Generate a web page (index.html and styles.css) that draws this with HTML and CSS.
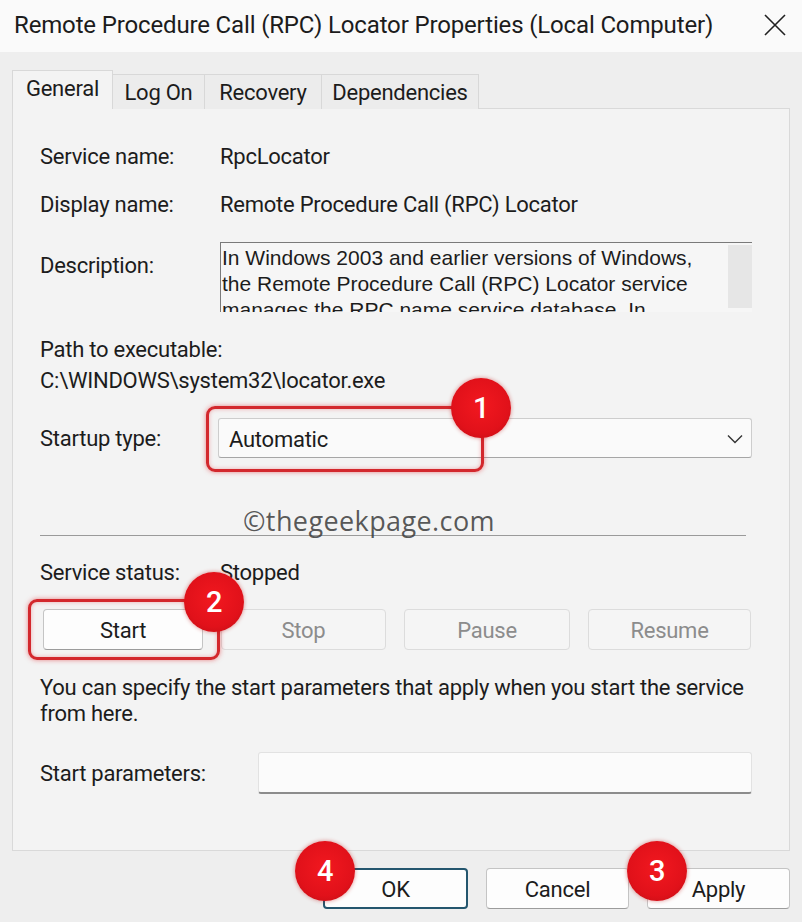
FILE: index.html
```html
<!DOCTYPE html>
<html lang="en">
<head>
    <meta charset="UTF-8">
    <title>Remote Procedure Call (RPC) Locator Properties</title>
    <link rel="stylesheet" href="styles.css">
</head>
<body>
    <div class="window">
        <div class="titlebar">
            <span class="title">Remote Procedure Call (RPC) Locator Properties (Local Computer)</span>
            <svg class="close" width="22" height="22" viewBox="0 0 22 22">
                <path d="M1 1 L21 21 M21 1 L1 21" stroke="#202020" stroke-width="1.6" fill="none"/>
            </svg>
        </div>

        <div class="tabs">
            <div class="tab active">General</div>
            <div class="tab">Log On</div>
            <div class="tab">Recovery</div>
            <div class="tab">Dependencies</div>
        </div>

        <div class="panel">
            <div class="row r-name">
                <span class="label">Service name:</span>
                <span>RpcLocator</span>
            </div>
            <div class="row r-display">
                <span class="label">Display name:</span>
                <span>Remote Procedure Call (RPC) Locator</span>
            </div>
            <div class="row r-desc">
                <span class="label">Description:</span>
                <div class="desc-box">
                    <div class="desc-text">In Windows 2003 and earlier versions of Windows,<br>the Remote Procedure Call (RPC) Locator service<br>manages the RPC name service database. In</div>
                    <div class="scroll"></div>
                </div>
            </div>
            <div class="line r-path">Path to executable:</div>
            <div class="line r-exe">C:\WINDOWS\system32\locator.exe</div>
            <div class="row r-startup">
                <span class="label">Startup type:</span>
                <div class="combo">
                    <span>Automatic</span>
                    <svg width="16" height="10" viewBox="0 0 16 10">
                        <path d="M1 1.5 L8 8.5 L15 1.5" stroke="#333" stroke-width="1.4" fill="none"/>
                    </svg>
                </div>
            </div>
            <div class="sep">
                <span class="wm">&copy;thegeekpage.com</span>
            </div>
            <div class="row r-status">
                <span class="label">Service status:</span>
                <span>Stopped</span>
            </div>
            <div class="svc-buttons">
                <button class="btn">Start</button>
                <button class="btn off">Stop</button>
                <button class="btn off">Pause</button>
                <button class="btn off">Resume</button>
            </div>
            <p class="help">You can specify the start parameters that apply when you start the service<br>from here.</p>
            <div class="row r-params">
                <span class="label wide">Start parameters:</span>
                <div class="input"></div>
            </div>
        </div>

        <div class="footer">
            <button class="btn ok">OK</button>
            <button class="btn">Cancel</button>
            <button class="btn">Apply</button>
        </div>

        <!-- annotations -->
        <div class="mark mark-1"></div>
        <div class="mark mark-2"></div>
        <div class="badge b1">1</div>
        <div class="badge b2">2</div>
        <div class="badge b3">3</div>
        <div class="badge b4">4</div>
    </div>
</body>
</html>
```

FILE: styles.css
```css
body{
    margin: 0;
    background-color: #efefef;
    font-family: Roboto, "Liberation Sans", sans-serif;
    font-size: 22px;
    letter-spacing: -0.25px;
    color: #1c1c1c;
}

.window{
    position: relative;
    width: 802px;
    height: 922px;
    background-color: #eeeeee;
    overflow: hidden;
}

.titlebar{
    height: 52px;
    background-color: #fafafa;
    display: flex;
    align-items: center;
    justify-content: space-between;
    padding: 0 16px 0 14px;
    box-sizing: border-box;
}

.title{
    font-size: 24px;
    letter-spacing: -0.15px;
    margin-top: -2px;
}

.close{
    margin-top: -2px;
}

.tabs{
    display: flex;
    align-items: flex-end;
    margin: 18px 0 -1px 12px;
    position: relative;
    z-index: 1;
}

.tab{
    height: 35px;
    display: flex;
    align-items: center;
    justify-content: center;
    white-space: nowrap;
    background-color: #ececec;
    border: 1px solid #d8d8d8;
    border-bottom: none;
    border-left: none;
    box-sizing: border-box;
}

.tab.active{
    height: 39px;
    width: 101px;
    padding: 0 0 4px;
    background-color: #f3f3f3;
    border-left: 1px solid #d8d8d8;
}

.tab:nth-child(2){ width: 92px; }
.tab:nth-child(3){ width: 117px; }
.tab:nth-child(4){ width: 157px; }

.panel{
    height: 743px;
    margin: 0 12px;
    padding: 0 37px 0 27px;
    background-color: #f3f3f3;
    border: 1px solid #d9d9d9;
    box-sizing: border-box;
}

.row{
    display: flex;
    align-items: center;
    height: 26px;
}

.label{
    width: 180px;
    flex-shrink: 0;
}

.label.wide{
    width: 218px;
}

.line{
    height: 26px;
    line-height: 26px;
}

.r-name{ margin-top: 34px; }
.r-display{ margin-top: 22px; }

.r-desc{
    margin-top: 25px;
    height: 70px;
    align-items: flex-start;
}

.r-desc .label{
    margin-top: 11px;
}

.desc-box{
    flex: 1;
    height: 70px;
    display: flex;
    overflow: hidden;
    border-top: 1px solid #7a7a7a;
    border-left: 1px solid #7a7a7a;
    box-sizing: border-box;
    background-color: #f6f6f6;
}

.desc-text{
    flex: 1;
    padding: 2px 0 0 1px;
    font-family: "Liberation Sans", Arial, sans-serif;
    font-size: 21px;
    letter-spacing: 0;
    line-height: 26px;
    white-space: nowrap;
}

.scroll{
    width: 24px;
    margin: 2px 0 4px;
    background-color: #e6e6e6;
}

.r-path{ margin-top: 25px; }
.r-exe{ margin-top: 5px; }

.r-startup{
    margin-top: 24px;
    height: 40px;
}

.combo{
    flex: 1;
    height: 40px;
    margin-left: -2px;
    display: flex;
    align-items: center;
    justify-content: space-between;
    padding: 2px 8px 0 10px;
    background-color: #fafafa;
    border: 1px solid #cdcdcd;
    border-bottom-color: #a6a6a6;
    border-radius: 3px;
    box-sizing: border-box;
}

.sep{
    position: relative;
    margin: 77px 6px 0 0;
    height: 1px;
    background-color: #9a9a9a;
}

.wm{
    position: absolute;
    left: 203px;
    top: -31px;
    font-family: "Open Sans", sans-serif;
    font-size: 27px;
    line-height: 34px;
    letter-spacing: 0.4px;
    white-space: nowrap;
    color: rgba(60, 60, 60, 0.85);
}

.r-status{ margin-top: 23px; }

.svc-buttons{
    display: grid;
    grid-template-columns: 160px 165px 166px 163px;
    column-gap: 18px;
    margin: 24px 0 0 3px;
}

.btn{
    height: 41px;
    font-family: Roboto, "Liberation Sans", sans-serif;
    font-size: 22px;
    letter-spacing: -0.25px;
    color: #1c1c1c;
    background-color: #fdfdfd;
    border: 1px solid #c4c4c4;
    border-bottom-color: #9c9c9c;
    border-radius: 4px;
    padding: 2px 0 0;
}

.btn.off{
    color: #8c8c8c;
    background-color: #f5f5f5;
    border-color: #dcdcdc;
}

.help{
    margin: 25px -20px 0 0;
    line-height: 26px;
    white-space: nowrap;
}

.r-params{
    margin-top: 25px;
    height: 42px;
}

.input{
    flex: 1;
    height: 42px;
    background-color: #fbfbfb;
    border: 1px solid #e2e2e2;
    border-bottom: 2px solid #8c8c8c;
    border-radius: 3px;
    box-sizing: border-box;
}

.footer{
    display: flex;
    justify-content: flex-end;
    gap: 18px;
    margin: 17px 12px 0 0;
}

.footer .btn{
    width: 143px;
}

.footer .btn.ok{
    width: 145px;
    border: 2px solid #24566e;
}

.mark{
    position: absolute;
    border: 3px solid #d3282d;
    border-radius: 9px;
    box-shadow: 0 0 5px rgba(225, 40, 45, 0.55), inset 0 0 4px rgba(225, 40, 45, 0.35);
}

.mark-1{ left: 206px; top: 406px; width: 272px; height: 60px; }
.mark-2{ left: 28px; top: 599px; width: 186px; height: 55px; }

.badge{
    position: absolute;
    width: 60px;
    height: 60px;
    border-radius: 50%;
    display: flex;
    align-items: center;
    justify-content: center;
    color: #fff;
    font-size: 29px;
    font-weight: 500;
    background: radial-gradient(circle at 50% 45%, #f2181f 0%, #e1111a 62%, #b90d13 100%);
    box-shadow: 0 0 4px rgba(190, 0, 0, 0.45);
}

.b1{ left: 451px; top: 378px; }
.b2{ left: 184px; top: 572px; }
.b3{ left: 627px; top: 841px; }
.b4{ left: 295px; top: 841px; }
```
